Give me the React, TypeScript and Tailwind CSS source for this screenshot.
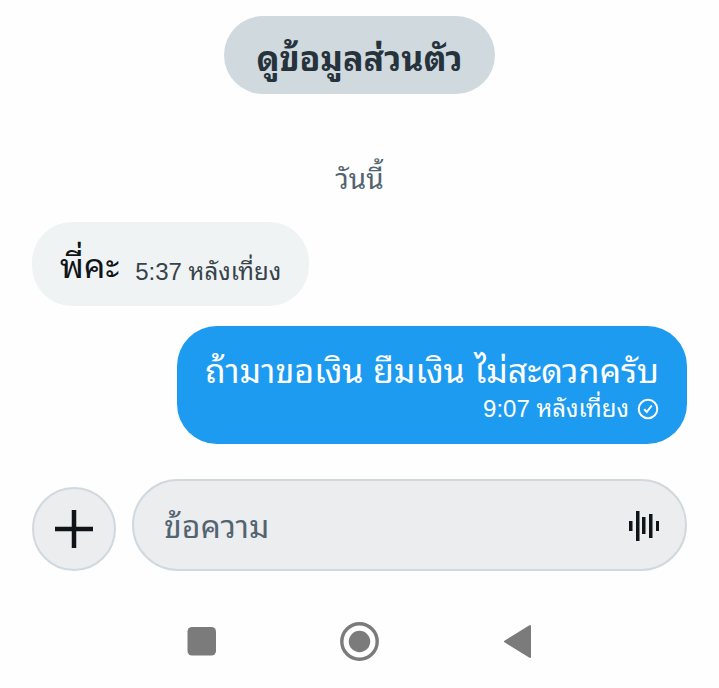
import type { ReactNode } from 'react';

interface MessageMetaProps {
  time: string;
  children?: ReactNode;
}

const MessageMeta = ({ time, children }: MessageMetaProps) => (
  <span className="flex items-center text-[24px] leading-8">
    {time}
    {children}
  </span>
);

// Voice message bars: x, top, height
const voiceBars = [
  [0, 11, 10],
  [7, 1, 30],
  [13, 7, 17],
  [20, 4, 24],
  [27, 11, 10],
];

export default function App() {
  return (
    <div className="bg-[#fefefe] px-8 pt-4 pb-7 font-['Liberation_Sans','Noto_Sans_Thai_Looped',sans-serif] text-[#0f1419]">
      <header className="flex justify-center">
        <button className="h-[78px] rounded-full bg-[#cfd9de] px-8 pt-2 text-[34px] font-bold text-[#27333c]">
          ดูข้อมูลส่วนตัว
        </button>
      </header>

      <main className="flex flex-col">
        <p className="mt-[66px] text-center text-[28px] leading-10 text-[#536471]">วันนี้</p>

        <div className="mt-[22px] flex h-[84px] items-center gap-4 self-start rounded-[40px] bg-[#eff3f4] px-7 pt-1">
          <p className="text-[34px] leading-10">พี่คะ</p>
          <div className="pt-3 text-[#37424a]">
            <MessageMeta time="5:37 หลังเที่ยง" />
          </div>
        </div>

        <div className="mt-5 flex h-[118px] flex-col items-end justify-center gap-1 self-end rounded-[40px] bg-[#1d9bf0] px-7 pt-2 text-white">
          <p className="text-[34px] leading-9">ถ้ามาขอเงิน ยืมเงิน ไม่สะดวกครับ</p>
          <MessageMeta time="9:07 หลังเที่ยง">
            <svg className="ml-2 size-[22px]" viewBox="0 0 22 22" fill="none" stroke="currentColor" strokeWidth="2">
              <circle cx="11" cy="11" r="9.3" />
              <path d="M7.2 11.2l2.6 2.8 5-6.5" />
            </svg>
          </MessageMeta>
        </div>
      </main>

      <form className="mt-[35px] flex items-end gap-4">
        <button
          type="button"
          aria-label="เพิ่ม"
          className="flex size-[84px] items-center justify-center rounded-full border-2 border-[#cfd9de] bg-[#ebedef]"
        >
          <svg className="size-10" viewBox="0 0 40 40" stroke="currentColor" strokeWidth="4.5">
            <path d="M20 1v38M1 20h38" />
          </svg>
        </button>
        <div className="flex h-[92px] flex-1 items-center rounded-full border-2 border-[#cfd9de] bg-[#ebedef] pr-[26px] pl-[30px]">
          <input
            type="text"
            aria-label="ข้อความ"
            placeholder="ข้อความ"
            className="h-full min-w-0 flex-1 bg-transparent pt-1 text-[32px] outline-none placeholder:text-[#536471]"
          />
          <button type="button" aria-label="ข้อความเสียง">
            <svg className="h-9 w-[30px]" viewBox="0 -3 30 36" fill="currentColor">
              {voiceBars.map(([x, y, height]) => (
                <rect key={x} x={x} y={y} width="3.5" height={height} />
              ))}
            </svg>
          </button>
        </div>
      </form>

      {/* System navigation */}
      <nav className="mt-[50px] grid grid-cols-3 justify-items-center px-[90px] text-[#7b7b7b]">
        <button aria-label="แอปล่าสุด">
          <svg className="size-10" viewBox="0 0 40 40" fill="currentColor">
            <rect x="6.5" y="6" width="28.5" height="28.5" rx="4.5" />
          </svg>
        </button>
        <button aria-label="หน้าแรก">
          <svg className="size-10" viewBox="0 0 40 40" fill="currentColor">
            <circle cx="20.5" cy="20.5" r="17.7" fill="none" stroke="currentColor" strokeWidth="3.4" />
            <circle cx="20.5" cy="20.5" r="10.7" />
          </svg>
        </button>
        <button aria-label="ย้อนกลับ">
          <svg className="size-10" viewBox="0 0 40 40" fill="currentColor" stroke="currentColor" strokeWidth="2" strokeLinejoin="round">
            <path d="M7 20.5L32 5v31z" />
          </svg>
        </button>
      </nav>
    </div>
  );
}
